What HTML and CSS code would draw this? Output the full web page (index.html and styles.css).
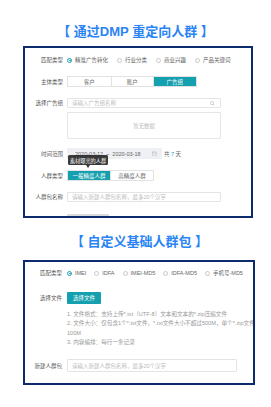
FILE: index.html
```html
<!DOCTYPE html>
<html>
<head>
<meta charset="utf-8">
<link rel="stylesheet" href="styles.css">
</head>
<body>
<div class="page">
  <h1 class="title t1">【 通过DMP 重定向人群 】</h1>
  <section class="frame f1">
    <div class="row r1">
      <span class="lbl">匹配类型</span>
      <div class="radios">
        <span class="radio on"><i></i>精准广告转化</span>
        <span class="radio"><i></i>行业分类</span>
        <span class="radio"><i></i>商业兴趣</span>
        <span class="radio"><i></i>产品关键词</span>
      </div>
    </div>
    <div class="row r2">
      <span class="lbl">主体类型</span>
      <div class="seg seg3">
        <span>客户</span><span>账户</span><span class="act">广告组</span>
      </div>
    </div>
    <div class="row r3">
      <span class="lbl">选择广告组</span>
      <div class="input in1"><span class="ph">请输入广告组名称</span>
        <svg class="search" width="5" height="5" viewBox="0 0 10 10"><circle cx="4.3" cy="4.3" r="3.3" fill="none" stroke="#aaa" stroke-width="1.1"/><path d="M6.7 6.7L9 9" stroke="#aaa" stroke-width="1.1"/></svg>
      </div>
    </div>
    <div class="empty">暂无数据</div>
    <div class="row r4">
      <span class="lbl">时间范围</span>
      <div class="date">
        <span>2020-03-12</span><span class="tilde">~</span><span>2020-03-18</span>
        <svg class="cal" width="5" height="5" viewBox="0 0 10 10"><rect x="1" y="2" width="8" height="7" fill="none" stroke="#bbb" stroke-width="1"/><path d="M1 4.5H9M3.5 1V3M6.5 1V3" stroke="#bbb" stroke-width="1"/></svg>
      </div>
      <span class="days">共 <b>7</b> 天</span>
      <div class="tip">素材曝光的人群</div>
    </div>
    <div class="row r5">
      <span class="lbl">人群类型</span>
      <div class="seg seg2">
        <span class="act">一般精度人群</span><span>高精度人群</span>
      </div>
    </div>
    <div class="row r6">
      <span class="lbl">人群包名称</span>
      <div class="input in1"><span class="ph">请输入新建人群包名称，最多20个汉字</span></div>
    </div>
    <div class="graybtn"></div>
  </section>

  <h1 class="title t2">【 自定义基础人群包 】</h1>
  <section class="frame f2">
    <div class="row q1">
      <span class="lbl">匹配类型</span>
      <div class="radios">
        <span class="radio on"><i></i>IMEI</span>
        <span class="radio"><i></i>IDFA</span>
        <span class="radio"><i></i>IMEI-MD5</span>
        <span class="radio"><i></i>IDFA-MD5</span>
        <span class="radio"><i></i>手机号-MD5</span>
      </div>
    </div>
    <div class="row q2">
      <span class="lbl">选择文件</span>
      <span class="btn">选择文件</span>
    </div>
    <div class="hints">
      <div>1. 文件格式：支持上传*.txt（UTF-8）文本和文本的*.zip压缩文件</div>
      <div>2. 文件大小：仅包含1个*.txt文件，*.txt文件大小不超过500M，单个*.zip文件</div>
      <div>100M</div>
      <div>3. 内容编排：每行一条记录</div>
    </div>
    <div class="row q3">
      <span class="lbl">新建人群包</span>
      <div class="input in2"><span class="ph">请输入新建人群包名称，最多20个汉字</span></div>
    </div>
  </section>
</div>
</body>
</html>
```

FILE: styles.css
```css
* { box-sizing: border-box; }
body {
  margin: 0;
  background: #fff;
  font-family: "Liberation Sans", "Noto Sans CJK SC", sans-serif;
  color: #555;
}
.page { width: 271px; }
.title {
  margin: 0;
  font-size: 13px;
  line-height: 16px;
  font-weight: bold;
  color: #2a84f5;
  text-align: center;
  font-family: "Liberation Sans", "Noto Sans CJK SC", sans-serif;
}
.t1 { padding-top: 24px; margin-bottom: 6px; }
.t2 { margin-top: 16px; margin-bottom: 10px; padding-left: 8px; }

.frame {
  border: 2px solid #0c2a6c;
  background: #fff;
  overflow: hidden;
  margin-left: 23px;
}
.f1 { width: 230px; height: 172px; padding-top: 7px; font-size: 5.5px; }
.f2 { width: 232px; height: 125px; padding-top: 6px; font-size: 5.5px; }

.row { display: flex; align-items: center; position: relative; white-space: nowrap; }
.lbl { flex: none; text-align: right; color: #555; }
.f1 .lbl { width: 38px; margin-right: 4px; }
.f2 .lbl { width: 37px; margin-right: 5px; }

.radios { display: flex; align-items: center; color: #666; }
.radio { display: flex; align-items: center; margin-right: 9px; }
.f2 .radio { margin-right: 8px; }
.radio i {
  width: 5px; height: 5px; border-radius: 50%;
  border: 0.6px solid #c8c8c8; margin-right: 3px; position: relative; flex: none;
}
.radio.on i { border-color: #14a0ae; }
.radio.on i::after {
  content: ""; position: absolute; left: 1.1px; top: 1.1px;
  width: 1.8px; height: 1.8px; border-radius: 50%; background: #14a0ae;
}

.r1 { height: 10px; margin-bottom: 11px; }
.r2 { height: 11px; margin-bottom: 11px; }
.r3 { height: 10px; margin-bottom: 4px; }
.r4 { height: 11px; margin-bottom: 11px; }
.r5 { height: 11px; margin-bottom: 11px; }
.r6 { height: 10px; margin-bottom: 12px; }

.seg { display: flex; height: 11px; border: 0.6px solid #e2e2e2; }
.seg span {
  display: flex; align-items: center; justify-content: center;
  color: #666; border-left: 0.6px solid #e2e2e2;
}
.seg span:first-child { border-left: none; }
.seg span.act { background: #14a0ae; color: #fff; }
.seg3 span { width: 42.5px; }
.seg2 span:first-child { width: 42px; }
.seg2 span:last-child { width: 43px; }

.input {
  height: 10px; border: 0.6px solid #e4e4e4; border-radius: 1px;
  display: flex; align-items: center; padding-left: 4px; position: relative;
}
.in1 { width: 154px; }
.ph { color: #bbb; }
.search { position: absolute; right: 5px; top: 2.3px; }

.empty {
  margin-left: 42px; width: 154px; height: 27px;
  border: 0.6px solid #e6e6e6; border-radius: 1px;
  display: flex; align-items: center; justify-content: center;
  color: #bbb; margin-bottom: 9px;
}

.date {
  width: 95px; height: 11px; background: #eef0f4; border-radius: 1px;
  display: flex; align-items: center; padding-left: 8px; color: #666; position: relative;
}
.tilde { margin: 0 3px 0 3px; }
.cal { position: absolute; right: 5px; top: 3px; }
.days { margin-left: 2px; color: #666; }
.days b { color: #14a0ae; font-weight: normal; }

.tip {
  position: absolute; left: 43px; top: 7px; width: 40px; height: 10px;
  background: rgba(40, 40, 40, 0.92); color: #fff; border-radius: 1.5px;
  display: flex; align-items: center; justify-content: center; font-size: 5.2px;
}
.tip::after {
  content: ""; position: absolute; left: 18px; bottom: -3px;
  border-left: 2.5px solid transparent; border-right: 2.5px solid transparent;
  border-top: 3px solid rgba(40, 40, 40, 0.92);
}

.graybtn { margin-left: 42px; width: 42px; height: 10px; background: #dcdcdc; border-radius: 1px; }

.q1 { height: 10px; margin-bottom: 14px; }
.q2 { height: 12px; margin-bottom: 6px; }
.btn {
  width: 34px; height: 12px; background: #14a0ae; color: #fff; border-radius: 1px;
  display: flex; align-items: center; justify-content: center;
}
.hints {
  margin-left: 42px; color: #999; line-height: 9.3px; white-space: nowrap;
  margin-bottom: 12px; font-size: 5.6px;
}
.q3 { height: 13px; }
.in2 { width: 170px; height: 13px; }
```
